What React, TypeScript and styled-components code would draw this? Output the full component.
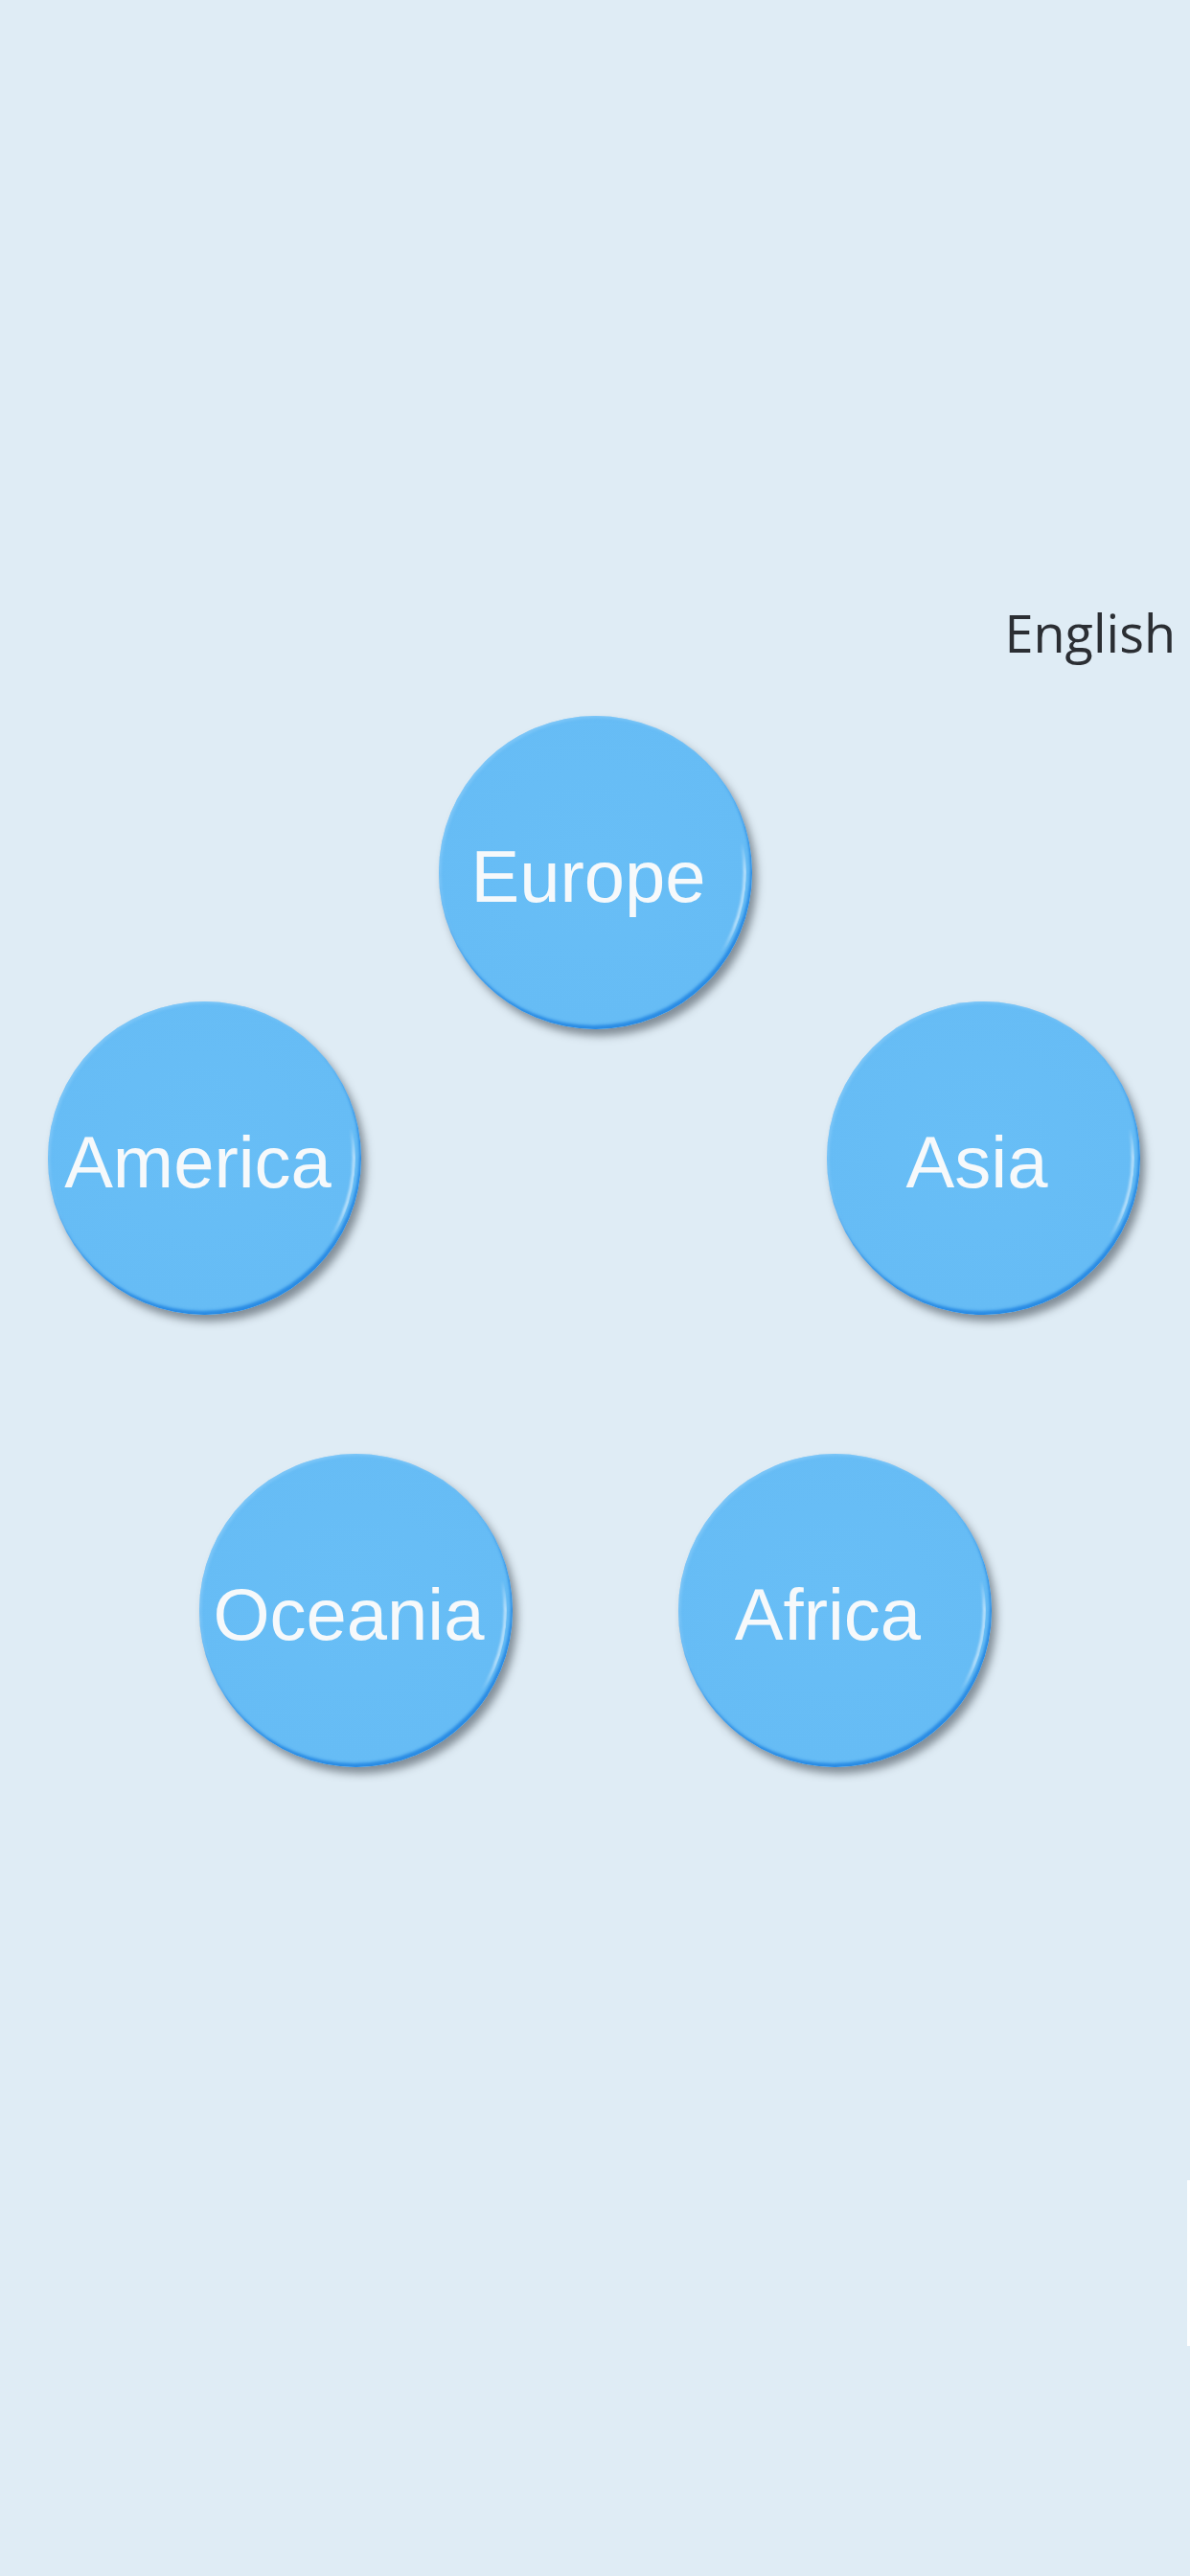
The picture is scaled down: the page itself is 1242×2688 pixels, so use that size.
import styled, { createGlobalStyle } from "styled-components";

const GlobalStyle = createGlobalStyle`
  html, body {
    margin: 0;
    padding: 0;
    background: #dfecf5;
  }
  * {
    box-sizing: border-box;
  }
`;

const Page = styled.div`
  position: relative;
  width: 1242px;
  min-height: 2688px;
  padding-top: 633px;
  background: #dfecf5;
  overflow: hidden;
`;

const LanguageBar = styled.div`
  display: flex;
  justify-content: flex-end;
  padding-right: 15px;
`;

const Language = styled.span`
  font-family: "Open Sans", "Noto Sans", sans-serif;
  font-size: 54px;
  font-weight: 500;
  line-height: 1;
  color: #2b2e33;
`;

const Board = styled.div`
  display: flex;
  flex-direction: column;
  margin-top: 60px;
`;

const Row = styled.div<{ $mode: "center" | "spread" | "pair" }>`
  display: flex;
  justify-content: ${(p) => (p.$mode === "spread" ? "space-between" : "center")};
  gap: ${(p) => (p.$mode === "pair" ? "173px" : "0")};
  padding: ${(p) => (p.$mode === "spread" ? "0 52px 0 50px" : "0")};
`;

const SpreadRow = styled(Row)`
  margin-top: -29px;
`;

const PairRow = styled(Row)`
  margin-top: 145px;
`;

const Button = styled.button`
  position: relative;
  width: 327px;
  height: 327px;
  flex: none;
  border: none;
  border-radius: 50%;
  padding: 8px 14px 0 0;
  display: flex;
  align-items: center;
  justify-content: center;
  cursor: pointer;
  background: radial-gradient(
    circle at 48% 45%,
    #68bef6 0%,
    #66bcf5 72%,
    #5db5f3 88%,
    #3a9bec 97%,
    #2b90e8 100%
  );
  box-shadow: 5px 7px 9px rgba(40, 50, 60, 0.5),
    inset -2px -4px 3px rgba(30, 130, 225, 0.85),
    inset 2px 2px 3px rgba(140, 205, 250, 0.6);
  font-family: "Liberation Sans", Arial, sans-serif;
  font-size: 76px;
  line-height: 1;
  color: #f6f9fb;

  &::after {
    content: "";
    position: absolute;
    inset: 6px;
    border-radius: 50%;
    border-right: 3px solid rgba(255, 255, 255, 0.6);
    border-top: 3px solid transparent;
    border-bottom: 3px solid transparent;
    transform: rotate(6deg);
    filter: blur(0.8px);
    -webkit-mask-image: linear-gradient(
      to bottom,
      transparent 35%,
      #000 44%,
      #000 62%,
      transparent 72%
    );
    mask-image: linear-gradient(
      to bottom,
      transparent 35%,
      #000 44%,
      #000 62%,
      transparent 72%
    );
  }
`;

const EdgeMark = styled.div`
  position: absolute;
  right: 0;
  top: 2275px;
  width: 3px;
  height: 173px;
  background: #ffffff;
`;

export default function App() {
  return (
    <>
      <GlobalStyle />
      <Page>
        <LanguageBar>
          <Language>English</Language>
        </LanguageBar>
        <Board>
          <Row $mode="center">
            <Button>Europe</Button>
          </Row>
          <SpreadRow $mode="spread">
            <Button>America</Button>
            <Button>Asia</Button>
          </SpreadRow>
          <PairRow $mode="pair">
            <Button>Oceania</Button>
            <Button>Africa</Button>
          </PairRow>
        </Board>
        <EdgeMark />
      </Page>
    </>
  );
}
